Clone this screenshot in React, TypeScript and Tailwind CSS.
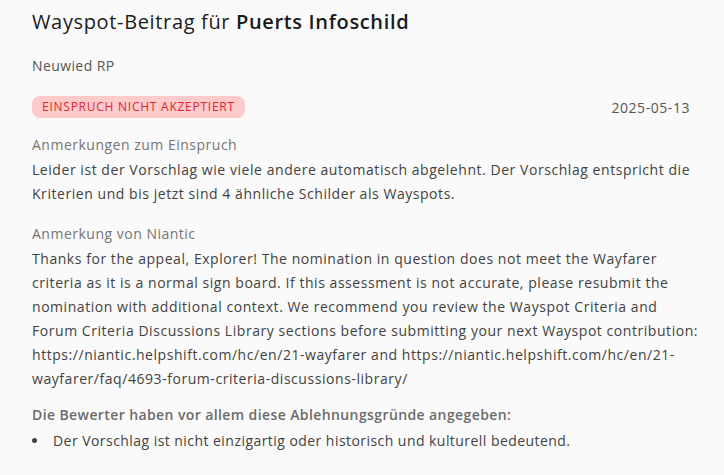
import React from 'react';

const font = { fontFamily: '"Open Sans", "Liberation Sans", sans-serif' };

const Section = ({ label, lines, className }: { label: string; lines: string[]; className: string }) => (
  <div className={className}>
    <div className="mb-[1px] text-[14px] leading-6 tracking-[0.5px] text-[#757575]">{label}</div>
    <p className="text-[14px] leading-6 tracking-[0.55px] text-[#424242]">
      {lines.map((l, i) => (
        <span key={i} className="block whitespace-nowrap">{l}</span>
      ))}
    </p>
  </div>
);

export default function App() {
  return (
    <div className="min-h-[475px] w-[724px] bg-[#fafafa] px-8 pt-[8px]" style={font}>
      <h1 className="text-[20px] leading-7 tracking-[0.65px] text-[#1a1a1a]">
        Wayspot-Beitrag für <span className="font-semibold">Puerts Infoschild</span>
      </h1>
      <div className="mt-[20px] text-[14px] leading-5 tracking-[0.4px] text-[#555]">Neuwied RP</div>
      <div className="mt-[20px] flex items-center justify-between pr-[2px]">
        <span className="rounded-lg bg-[#ffcaca] px-[10px] py-[2px] text-[12px] leading-[18px] tracking-[0.75px] text-[#e0262f]">
          EINSPRUCH NICHT AKZEPTIERT
        </span>
        <span className="text-[14px] tracking-[0.55px] text-[#555]">2025-05-13</span>
      </div>
      <Section
        className="mt-[15px]"
        label="Anmerkungen zum Einspruch"
        lines={[
          'Leider ist der Vorschlag wie viele andere automatisch abgelehnt. Der Vorschlag entspricht die',
          'Kriterien und bis jetzt sind 4 ähnliche Schilder als Wayspots.',
        ]}
      />
      <Section
        className="mt-[16px]"
        label="Anmerkung von Niantic"
        lines={[
          'Thanks for the appeal, Explorer! The nomination in question does not meet the Wayfarer',
          'criteria as it is a normal sign board. If this assessment is not accurate, please resubmit the',
          'nomination with additional context. We recommend you review the Wayspot Criteria and',
          'Forum Criteria Discussions Library sections before submitting your next Wayspot contribution:',
          'https://niantic.helpshift.com/hc/en/21-wayfarer and https://niantic.helpshift.com/hc/en/21-',
          'wayfarer/faq/4693-forum-criteria-discussions-library/',
        ]}
      />
      <div className="mt-[12px] text-[14px] font-semibold leading-6 tracking-[0.4px] text-[#6b6b6b]">
        Die Bewerter haben vor allem diese Ablehnungsgründe angegeben:
      </div>
      <ul className="mt-[2px] list-disc pl-[17px] text-[14px] leading-6 tracking-[0.45px] text-[#424242] marker:text-[#424242]">
        <li className="pl-[4px]">Der Vorschlag ist nicht einzigartig oder historisch und kulturell bedeutend.</li>
      </ul>
    </div>
  );
}
